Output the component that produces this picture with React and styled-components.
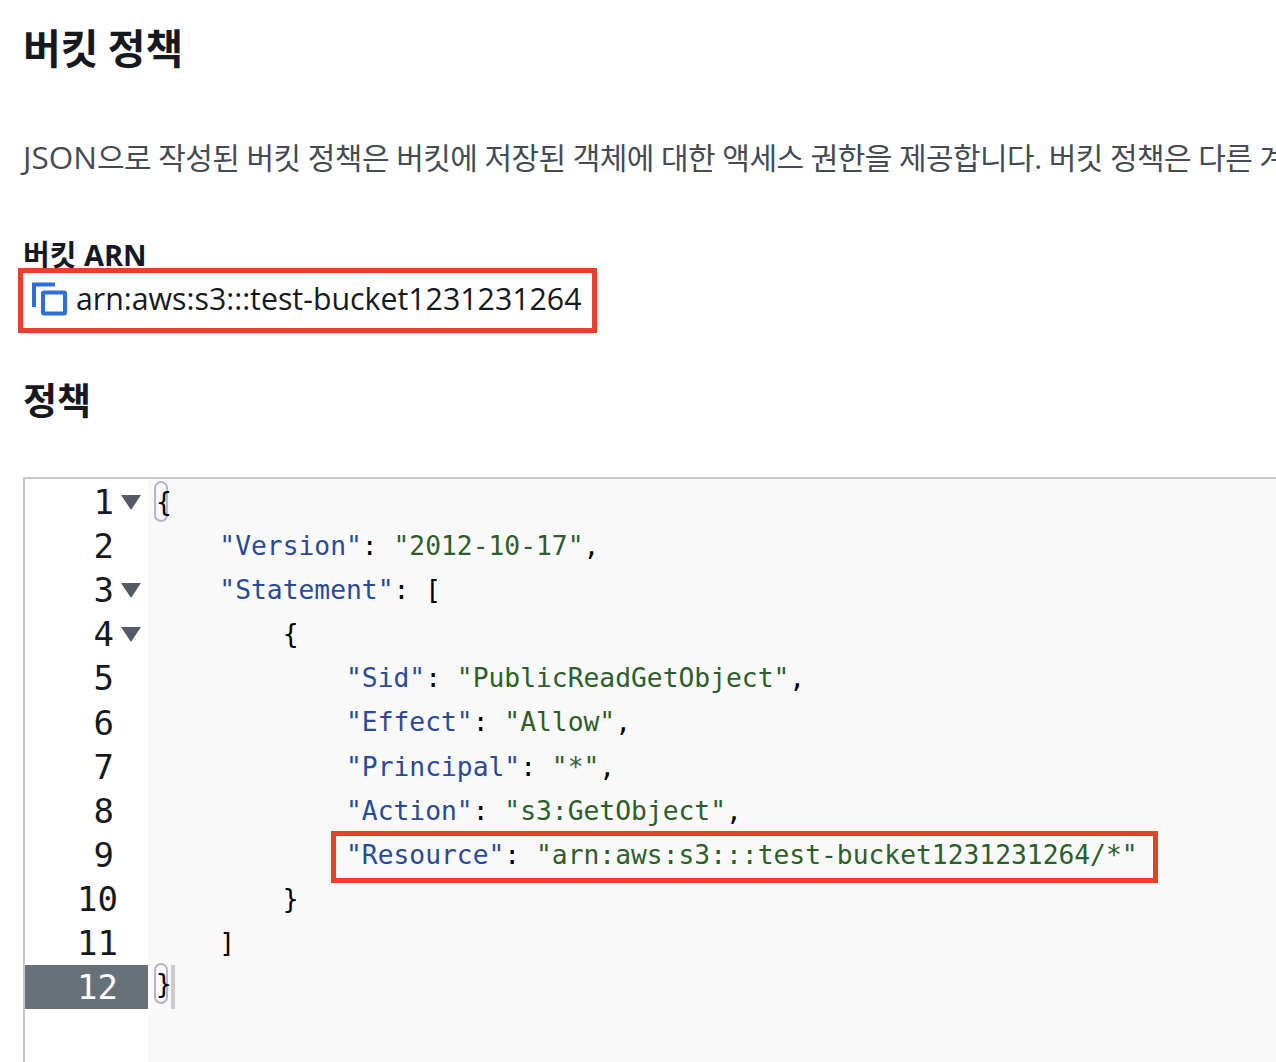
import React from "react";
import styled, { createGlobalStyle } from "styled-components";

const Global = createGlobalStyle`
    html, body {
        margin: 0;
        background: #fff;
    }
    body {
        width: 1276px;
        height: 1062px;
        overflow: hidden;
        font-family: "Open Sans", "Noto Sans CJK KR", sans-serif;
        color: #16191f;
    }
`;

const Page = styled.div`
    width: 1276px;
    height: 1062px;
    overflow: hidden;
    padding: 19px 0 0 23px;
    box-sizing: border-box;
`;

const Title = styled.h1`
    margin: 0;
    font-family: "Noto Sans CJK KR", sans-serif;
    font-size: 41px;
    line-height: 54px;
    font-weight: 700;
`;

const Description = styled.p`
    margin: 63px 0 0;
    height: 44px;
    font-size: 30px;
    line-height: 44px;
    color: #444b54;
    white-space: nowrap;
    letter-spacing: -0.57px;
`;

const Latin = styled.span`
    font-size: 31.5px;
    line-height: 0;
    letter-spacing: 0;
`;

const Label = styled.div`
    margin-top: 62px;
    font-size: 29px;
    line-height: 26px;
    font-weight: 700;
`;

const ArnBox = styled.div`
    display: inline-flex;
    align-items: center;
    gap: 8px;
    margin: 0 0 0 -5px;
    height: 65px;
    padding: 0 10px 4px 9px;
    box-sizing: border-box;
    border: 5px solid #e8412a;
    font-size: 30.3px;
`;

const SectionTitle = styled.h2`
    margin: 40px 0 0;
    font-family: "Noto Sans CJK KR", sans-serif;
    font-size: 37px;
    line-height: 52px;
    font-weight: 700;
`;

const Editor = styled.div`
    display: flex;
    margin-top: 52px;
    height: 600px;
    border-top: 2px solid #c6c6cd;
    border-left: 2px solid #c6c6cd;
`;

const Gutter = styled.div`
    flex: none;
    width: 123px;
    padding-top: 1px;
    background: #fff;
`;

const GutterRow = styled.div`
    display: flex;
    align-items: center;
    height: 44.1px;
    background: ${(p) => (p.$active ? "#687078" : "transparent")};
    color: ${(p) => (p.$active ? "#fff" : "#16191f")};
    font-family: "DejaVu Sans Mono", monospace;
    font-size: 34px;
`;

const LineNumber = styled.span`
    width: ${(p) => (p.$single ? 89 : 93)}px;
    margin-right: ${(p) => (p.$single ? 3 : 0)}px;
    text-align: right;
`;

const Fold = styled.svg`
    width: 20px;
    height: 15px;
    margin-left: 4px;
    fill: #545b64;
`;

const Code = styled.div`
    flex: 1;
    padding-top: 1px;
    background: #f9f9f9;
    font-family: "DejaVu Sans Mono", monospace;
    font-size: 26.3px;
    color: #000;
`;

const CodeLine = styled.div`
    height: 44.1px;
    line-height: 44.1px;
    padding-left: 8px;
    white-space: pre;
`;

const Key = styled.span`
    color: #2a4a94;
`;

const Str = styled.span`
    color: #2d5d2a;
`;

const Bracket = styled.span`
    display: inline-block;
    box-sizing: border-box;
    width: 14px;
    height: 41px;
    margin: ${(p) => p.$top}px 0 0 -2px;
    border: 2px solid #b4b4cd;
    border-radius: 7px;
    line-height: 39px;
    vertical-align: top;
`;

const Cursor = styled.span`
    display: inline-block;
    width: 4px;
    height: 44px;
    margin-left: 3px;
    background: #ccc;
    vertical-align: top;
`;

const Marked = styled.span`
    position: relative;
    &::after {
        content: "";
        position: absolute;
        inset: -9px -20px -13px -15px;
        border: 5px solid #e8412a;
    }
`;

function CopyIcon() {
    return (
        <svg width="36" height="36" viewBox="0 0 36 36" fill="none">
            <path d="M2 26V3.5h21" stroke="#2f6fdc" strokeWidth="4" />
            <rect x="11" y="11.5" width="22" height="21" rx="1" stroke="#2f6fdc" strokeWidth="4" />
        </svg>
    );
}

const folds = [1, 3, 4];

const lines = [
    <Bracket $top={1}>{"{"}</Bracket>,
    <>{"    "}<Key>"Version"</Key>: <Str>"2012-10-17"</Str>,</>,
    <>{"    "}<Key>"Statement"</Key>: [</>,
    <>{"        {"}</>,
    <>{"            "}<Key>"Sid"</Key>: <Str>"PublicReadGetObject"</Str>,</>,
    <>{"            "}<Key>"Effect"</Key>: <Str>"Allow"</Str>,</>,
    <>{"            "}<Key>"Principal"</Key>: <Str>"*"</Str>,</>,
    <>{"            "}<Key>"Action"</Key>: <Str>"s3:GetObject"</Str>,</>,
    <>{"            "}<Marked><Key>"Resource"</Key>: <Str>"arn:aws:s3:::test-bucket1231231264/*"</Str></Marked></>,
    <>{"        }"}</>,
    <>{"    ]"}</>,
    <><Bracket $top={-2}>{"}"}</Bracket><Cursor /></>,
];

export default function App() {
    return (
        <>
            <Global />
            <Page>
                <Title>버킷 정책</Title>
                <Description>
                    <Latin>JSON</Latin>으로 작성된 버킷 정책은 버킷에 저장된 객체에 대한 액세스 권한을 제공합니다. 버킷 정책은 다른 계
                </Description>
                <Label>버킷 ARN</Label>
                <ArnBox>
                    <CopyIcon />
                    arn:aws:s3:::test-bucket1231231264
                </ArnBox>
                <SectionTitle>정책</SectionTitle>
                <Editor>
                    <Gutter>
                        {lines.map((_, i) => (
                            <GutterRow key={i} $active={i === 11}>
                                <LineNumber $single={i < 9}>{i + 1}</LineNumber>
                                {folds.includes(i + 1) && (
                                    <Fold viewBox="0 0 20 15">
                                        <path d="M0 0h20L10 15z" />
                                    </Fold>
                                )}
                            </GutterRow>
                        ))}
                    </Gutter>
                    <Code>
                        {lines.map((line, i) => (
                            <CodeLine key={i}>{line}</CodeLine>
                        ))}
                    </Code>
                </Editor>
            </Page>
        </>
    );
}
